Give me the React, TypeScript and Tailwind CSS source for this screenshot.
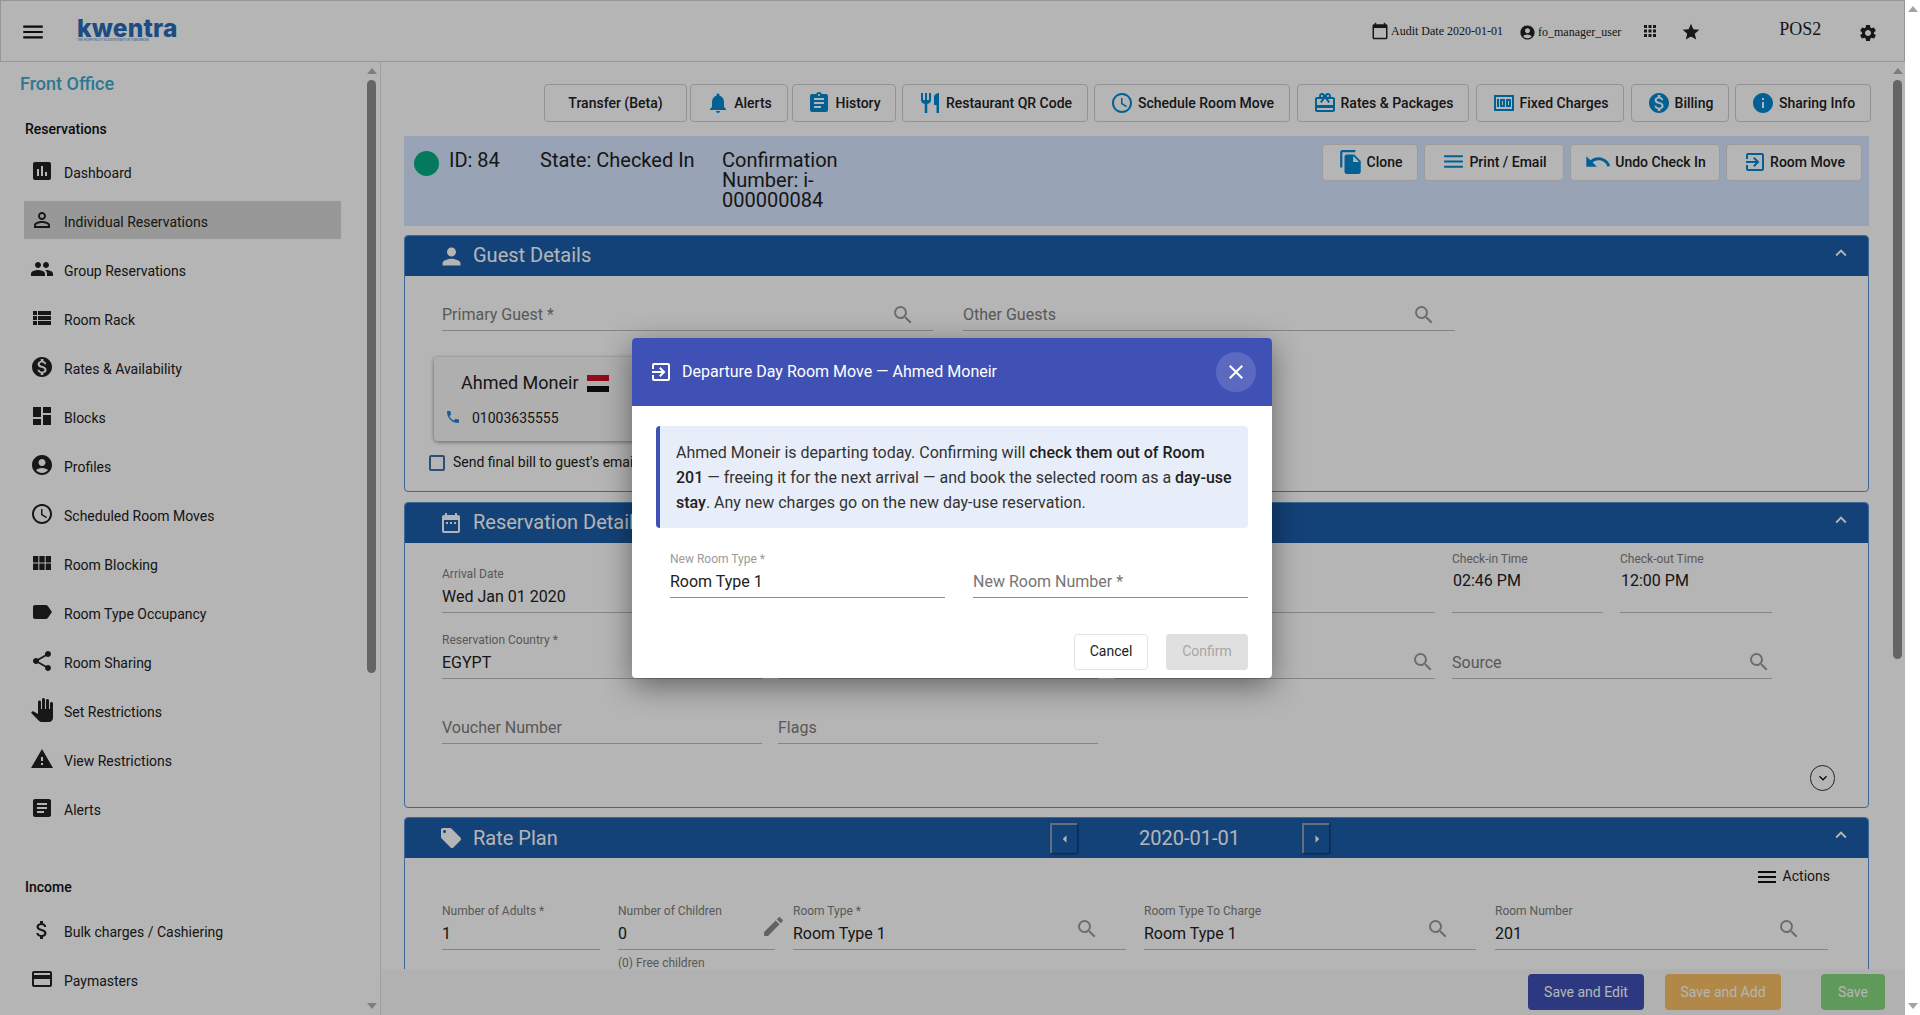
import type { ReactNode } from 'react'
import {
  MdAccessTime, MdAccountCircle, MdApps, MdArrowLeft, MdArrowRight, MdArticle, MdAssignment, MdAttachMoney,
  MdCalendarToday, MdCardGiftcard, MdClose, MdCreditCard, MdDashboard, MdDateRange, MdEdit, MdExitToApp,
  MdFileCopy, MdGroup, MdInfo, MdInsertChart, MdKeyboardArrowDown, MdKeyboardArrowUp, MdLabel, MdLocalOffer,
  MdMenu, MdMoney, MdMonetizationOn, MdNotifications, MdPanTool, MdPerson, MdPersonOutline, MdPhone,
  MdRestaurant, MdSearch, MdSettings, MdShare, MdStar, MdUndo, MdViewList, MdViewModule, MdWarning,
} from 'react-icons/md'

const RESERVATION_ITEMS = [
  { label: 'Dashboard', icon: <MdInsertChart size={24} /> },
  { label: 'Individual Reservations', icon: <MdPersonOutline size={24} />, active: true },
  { label: 'Group Reservations', icon: <MdGroup size={24} /> },
  { label: 'Room Rack', icon: <MdViewList size={24} /> },
  { label: 'Rates & Availability', icon: <MdMonetizationOn size={24} /> },
  { label: 'Blocks', icon: <MdDashboard size={24} /> },
  { label: 'Profiles', icon: <MdAccountCircle size={24} /> },
  { label: 'Scheduled Room Moves', icon: <MdAccessTime size={24} /> },
  { label: 'Room Blocking', icon: <MdViewModule size={24} /> },
  { label: 'Room Type Occupancy', icon: <MdLabel size={24} /> },
  { label: 'Room Sharing', icon: <MdShare size={24} /> },
  { label: 'Set Restrictions', icon: <MdPanTool size={24} /> },
  { label: 'View Restrictions', icon: <MdWarning size={24} /> },
  { label: 'Alerts', icon: <MdArticle size={24} /> },
]

const INCOME_ITEMS = [
  { label: 'Bulk charges / Cashiering', icon: <MdAttachMoney size={24} /> },
  { label: 'Paymasters', icon: <MdCreditCard size={24} /> },
]

const ACTIONS = [
  { label: 'Transfer (Beta)', cls: 'w-[143px]' },
  { label: 'Alerts', icon: <MdNotifications size={24} />, cls: 'w-[98px] ml-[3px]' },
  { label: 'History', icon: <MdAssignment size={24} />, cls: 'w-[104px] ml-[4px]' },
  { label: 'Restaurant QR Code', icon: <MdRestaurant size={24} />, cls: 'w-[186px] ml-[6px]' },
  { label: 'Schedule Room Move', icon: <MdAccessTime size={24} />, cls: 'w-[196px] ml-[6px]' },
  { label: 'Rates & Packages', icon: <MdCardGiftcard size={24} />, cls: 'w-[172px] ml-[7px]' },
  { label: 'Fixed Charges', icon: <MdMoney size={24} />, cls: 'w-[148px] ml-[7px]' },
  { label: 'Billing', icon: <MdMonetizationOn size={24} />, cls: 'w-[98px] ml-[7px]' },
  { label: 'Sharing Info', icon: <MdInfo size={24} />, cls: 'w-[136px] ml-[6px]' },
]

const STATUS_ACTIONS = [
  { label: 'Clone', icon: <MdFileCopy size={26} />, cls: 'w-[96px]' },
  { label: 'Print / Email', icon: <MdMenu size={25} />, cls: 'w-[140px]' },
  { label: 'Undo Check In', icon: <MdUndo size={28} />, cls: 'w-[150px]' },
  { label: 'Room Move', icon: <MdExitToApp size={24} />, cls: 'w-[136px]' },
]

function ArrowUp({ color }: { color: string }) {
  return <div className={'h-0 w-0 border-x-[5px] border-b-[6px] border-x-transparent ' + color} />
}

function ArrowDown({ color }: { color: string }) {
  return <div className={'h-0 w-0 border-x-[5px] border-t-[6px] border-x-transparent ' + color} />
}

function SideItem({ label, icon, active }: { label: string; icon: ReactNode; active?: boolean }) {
  return (
    <div className={'ml-[24px] mb-[11px] flex h-[38px] w-[317px] items-center gap-[10px] pl-[6px] text-[#212121] ' + (active ? 'bg-[#d6d6d6]' : '')}>
      {icon}
      <span className="pt-[4px] text-[14px]">{label}</span>
    </div>
  )
}

function Sidebar() {
  return (
    <aside className="flex h-[953px] w-[381px] shrink-0 border-r border-[#e0e0e0]">
      <div className="h-full w-[363px] overflow-hidden">
        <div className="mt-[10px] ml-[20px] h-[24px] text-[18px] leading-[24px] font-medium text-[#3fa9cf]">Front Office</div>
        <div className="mt-[23px] ml-[25px] mb-[13px] h-[20px] text-[14px] leading-[20px] font-medium text-[#111]">Reservations</div>
        {RESERVATION_ITEMS.map((item) => (
          <SideItem key={item.label} {...item} />
        ))}
        <div className="mt-[50px] ml-[25px] mb-[14px] h-[20px] text-[14px] leading-[20px] font-medium text-[#111]">Income</div>
        {INCOME_ITEMS.map((item) => (
          <SideItem key={item.label} {...item} />
        ))}
      </div>
      <div className="flex w-[17px] flex-col items-center pt-[6px]">
        <ArrowUp color="border-b-[#b0b0b0]" />
        <div className="mt-[6px] h-[593px] w-[9px] rounded-full bg-[#8f8f8f]" />
        <div className="mt-auto mb-[6px]">
          <ArrowDown color="border-t-[#b0b0b0]" />
        </div>
      </div>
    </aside>
  )
}

function TopBar() {
  return (
    <header className="flex h-[62px] items-start border border-[#d4d4d4] font-['Liberation_Serif',serif] text-[#212121]">
      <div className="mt-[18px] ml-[19px] text-[#111]">
        <MdMenu size={26} />
      </div>
      <div className="mt-[18px] ml-[31px] flex w-[105px] flex-col font-['Inter',sans-serif] text-[#2a6bb8]">
        <span className="text-[24.5px] leading-[19px] font-extrabold tracking-[0.2px]">kwentra</span>
        <span className="text-[3px] leading-[4px] whitespace-nowrap">THE HOSPITALITY ECOSYSTEM FOR TOMORROW</span>
      </div>
      <div className="mt-[20px] ml-[1189px] flex items-center text-[12px] leading-[20px]">
        <MdCalendarToday size={18} />
        <span className="ml-[2px]">Audit Date 2020-01-01</span>
      </div>
      <div className="mt-[21px] ml-[16px] flex items-center text-[12px] leading-[20px]">
        <MdAccountCircle size={17} />
        <span className="ml-[2px]">fo_manager_user</span>
      </div>
      <div className="mt-[21px] ml-[20px]">
        <MdApps size={18} />
      </div>
      <div className="mt-[21px] ml-[22px]">
        <MdStar size={20} />
      </div>
      <div className="mt-[16px] ml-[78px] text-[18px] leading-[24px]">POS2</div>
      <div className="mt-[22px] ml-[37px]">
        <MdSettings size={20} />
      </div>
    </header>
  )
}

function ActionButton({ label, icon, cls, raised }: { label: string; icon?: ReactNode; cls: string; raised?: boolean }) {
  return (
    <button className={'flex shrink-0 items-center justify-center rounded-[4px] border bg-white text-[14px] font-medium text-[#212121] ' + (raised ? 'h-[37px] gap-[3px] border-[#dcdcdc] pb-[2px] ' : 'h-[38px] gap-[4px] border-[#cfcfcf] ') + cls}>
      {icon && <span className="text-[#0288d1]">{icon}</span>}
      {label}
    </button>
  )
}

function Field({ label, value, floating, cls, searchCls, extra }: { label: string; value?: string; floating?: boolean; cls: string; searchCls?: string; extra?: ReactNode }) {
  return (
    <div className={'relative shrink-0 border-b border-[#bdbdbd] ' + cls}>
      {floating && <div className="mb-[3px] h-[16px] text-[12px] leading-[16px] whitespace-nowrap text-[#7d7d7d]">{label}</div>}
      <div className={'h-[24px] text-[16px] leading-[24px] ' + (floating ? 'text-[#212121]' : 'text-[#7d7d7d]')}>{floating ? value : label}</div>
      <div className="h-[3px]" />
      {extra}
      {searchCls && (
        <span className={'absolute text-[#9a9a9a] ' + searchCls}>
          <MdSearch size={24} />
        </span>
      )}
    </div>
  )
}

function PanelHeader({ icon, title, children }: { icon: ReactNode; title?: string; children?: ReactNode }) {
  return (
    <div className="flex h-[40px] items-center bg-[#1c5da9] text-white">
      <div className="ml-[32px] flex w-[28px] justify-center">{icon}</div>
      {title && <div className="ml-[8px] pb-[2px] text-[20px]">{title}</div>}
      {children}
      <div className="mr-[16px] mb-[6px] ml-auto">
        <MdKeyboardArrowUp size={22} />
      </div>
    </div>
  )
}

function GuestPanel() {
  return (
    <section className="mt-[9px] h-[257px] w-[1465px] overflow-hidden rounded-[4px] border border-[#5594d8]">
      <PanelHeader icon={<MdPerson size={27} />} title="Guest Details" />
      <div className="pl-[37px]">
        <div className="flex h-[55px] items-end gap-[30px]">
          <Field label="Primary Guest *" cls="w-[491px]" searchCls="right-[18px] bottom-[3px]" />
          <Field label="Other Guests" cls="w-[492px]" searchCls="right-[19px] bottom-[3px]" />
        </div>
        <div className="mt-[26px] -ml-[8px] h-[84px] w-[260px] rounded-[4px] bg-[#f7f7f7] pl-[27px] shadow-[0_1px_4px_rgba(0,0,0,0.45)]">
          <div className="flex items-center pt-[14px] text-[18px] leading-[24px] text-[#212121]">
            Ahmed Moneir
            <div className="ml-[8px] flex h-[17px] w-[22px] flex-col">
              <div className="h-[6px] bg-[#ce1126]" />
              <div className="h-[5px] bg-[#f5f5f5]" />
              <div className="h-[6px] bg-[#111]" />
            </div>
          </div>
          <div className="-ml-[16px] mt-[13px] flex items-center text-[14px] text-[#212121]">
            <span className="-mt-[4px] text-[#2f7fd0]">
              <MdPhone size={16} />
            </span>
            <span className="ml-[11px]">01003635555</span>
          </div>
        </div>
        <div className="-ml-[13px] mt-[11px] flex items-center text-[14px] text-[#212121]">
          <div className="h-[16px] w-[16px] rounded-[2px] border-2 border-[#3f6fa8]" />
          <span className="ml-[8px]">Send final bill to guest's email</span>
        </div>
      </div>
    </section>
  )
}

function ReservationPanel() {
  return (
    <section className="mt-[10px] h-[306px] w-[1465px] overflow-hidden rounded-[4px] border border-[#5594d8]">
      <PanelHeader icon={<MdDateRange size={24} />} title="Reservation Details" />
      <div className="flex flex-col pl-[37px]">
        <div className="flex h-[70px] items-end gap-[17px]">
          <Field floating label="Arrival Date" value="Wed Jan 01 2020" cls="w-[320px]" />
          <Field label="" cls="w-[319px]" />
          <Field label="" cls="w-[320px]" />
          <div className="relative h-[62px] w-[151px] shrink-0 border-b border-[#bdbdbd]">
            <div className="h-[16px] text-[12px] leading-[16px] text-[#7d7d7d]">Check-in Time</div>
            <div className="mt-[2px] pl-[1px] text-[16px] leading-[24px] text-[#212121]">02:46 PM</div>
          </div>
          <div className="relative h-[62px] w-[152px] shrink-0 border-b border-[#bdbdbd]">
            <div className="h-[16px] text-[12px] leading-[16px] text-[#7d7d7d]">Check-out Time</div>
            <div className="mt-[2px] pl-[1px] text-[16px] leading-[24px] text-[#212121]">12:00 PM</div>
          </div>
        </div>
        <div className="flex h-[66px] items-end gap-[17px]">
          <Field floating label="Reservation Country *" value="EGYPT" cls="w-[320px]" />
          <Field label="" cls="w-[319px]" />
          <Field label="" cls="w-[320px]" searchCls="right-[0px] bottom-[4px]" />
          <Field label="Source" cls="w-[320px]" searchCls="right-[1px] bottom-[4px]" />
        </div>
        <div className="flex h-[65px] items-end gap-[16px]">
          <Field label="Voucher Number" cls="w-[320px]" />
          <Field label="Flags" cls="w-[320px]" />
        </div>
        <div className="mt-[21px] ml-[1368px] flex h-[26px] w-[25px] items-center justify-center rounded-full border border-[#333] text-[#111]">
          <MdKeyboardArrowDown size={16} />
        </div>
      </div>
    </section>
  )
}

function RatePlanPanel() {
  return (
    <section className="mt-[9px] h-[300px] w-[1465px] overflow-hidden rounded-t-[4px] border border-[#5594d8]">
      <PanelHeader icon={<MdLocalOffer size={24} />}>
        <div className="ml-[8px] w-[577px] text-[20px]">Rate Plan</div>
        <div className="flex h-[30px] w-[27px] items-center justify-center border-t-2 border-l-2 border-[#8a9db5] shadow-[1px_1px_2px_rgba(0,0,0,0.5)]">
          <MdArrowLeft size={18} />
        </div>
        <div className="w-[225px] text-center text-[20px]">2020-01-01</div>
        <div className="flex h-[30px] w-[27px] items-center justify-center border-t-2 border-l-2 border-[#8a9db5] shadow-[1px_1px_2px_rgba(0,0,0,0.5)]">
          <MdArrowRight size={18} />
        </div>
      </PanelHeader>
      <div className="flex flex-col pl-[37px]">
        <div className="flex h-[38px] items-center justify-end pr-[38px] pb-[1px] text-[14px] text-[#212121]">
          <MdMenu size={24} className="text-[#111]" />
          <span className="ml-[4px]">Actions</span>
        </div>
        <div className="flex h-[54px] items-end">
          <Field floating label="Number of Adults *" value="1" cls="w-[158px]" />
          <Field
            floating
            label="Number of Children"
            value="0"
            cls="ml-[18px] w-[157px]"
            extra={
              <span className="absolute -right-[11px] bottom-[10px] text-[#8e8986]">
                <MdEdit size={25} />
              </span>
            }
          />
          <Field floating label="Room Type *" value="Room Type 1" cls="ml-[18px] w-[333px]" searchCls="right-[27px] bottom-[8px]" />
          <Field floating label="Room Type To Charge" value="Room Type 1" cls="ml-[18px] w-[332px]" searchCls="right-[26px] bottom-[8px]" />
          <Field floating label="Room Number" value="201" cls="ml-[19px] w-[333px]" searchCls="right-[27px] bottom-[8px]" />
        </div>
        <div className="mt-[5px] ml-[176px] text-[12px] leading-[16px] text-[#7d7d7d]">(0) Free children</div>
      </div>
    </section>
  )
}

function Main() {
  return (
    <main className="relative flex h-[953px] w-[1524px] overflow-hidden">
      <div className="w-[1509px] overflow-hidden pl-[23px]">
        <div className="flex pt-[22px] pl-[140px]">
          {ACTIONS.map((a) => (
            <ActionButton key={a.label} {...a} />
          ))}
        </div>
        <div className="mt-[14px] flex h-[90px] w-[1465px] items-start bg-[#d6e6ff] text-[20px] leading-[20px] text-[#212121]">
          <div className="mt-[15px] ml-[10px] h-[25px] w-[25px] rounded-full bg-[#04ac80]" />
          <div className="mt-[14px] ml-[10px] w-[91px]">ID: 84</div>
          <div className="mt-[14px] w-[182px]">State: Checked In</div>
          <div className="mt-[14px] w-[125px]">Confirmation Number: i-000000084</div>
          <div className="mt-[8px] mr-[7px] ml-auto flex gap-[6px]">
            {STATUS_ACTIONS.map((a) => (
              <ActionButton key={a.label} {...a} raised />
            ))}
          </div>
        </div>
        <GuestPanel />
        <ReservationPanel />
        <RatePlanPanel />
      </div>
      <div className="flex w-[15px] flex-col items-center pt-[6px]">
        <ArrowUp color="border-b-[#b0b0b0]" />
        <div className="mt-[6px] h-[579px] w-[9px] rounded-full bg-[#8f8f8f]" />
      </div>
      <div className="absolute right-0 bottom-0 left-0 flex h-[46px] items-center justify-end bg-[#fafafa] pr-[20px] text-[14px]">
        <button className="h-[36px] w-[116px] rounded-[4px] bg-[#3f51b5] text-white">Save and Edit</button>
        <button className="ml-[21px] h-[36px] w-[116px] rounded-[4px] bg-[#f9c064] text-white">Save and Add</button>
        <button className="ml-[40px] h-[36px] w-[64px] rounded-[4px] bg-[#86d980] text-white">Save</button>
      </div>
    </main>
  )
}

function MoveDialog() {
  return (
    <div role="dialog" className="w-[640px] overflow-hidden rounded-[4px] bg-white shadow-[0_8px_30px_rgba(0,0,0,0.45)]">
      <div className="flex h-[68px] items-center bg-[#3f51b5] pr-[16px] pl-[17px] text-white">
        <MdExitToApp size={24} />
        <div className="ml-[9px] text-[16px]">Departure Day Room Move — Ahmed Moneir</div>
        <button className="ml-auto flex h-[40px] w-[40px] items-center justify-center rounded-full bg-white/15">
          <MdClose size={24} />
        </button>
      </div>
      <div className="px-[24px] pt-[20px] pb-[8px]">
        <div className="flex h-[102px] items-center rounded-[4px] border-l-4 border-[#3f51b5] bg-[#e8eef9] pr-[14px] pl-[16px] text-[16px] leading-[25px] text-[#333]">
          <p className="pt-[1px]">
            Ahmed Moneir is departing today. Confirming will <b className="font-medium text-[#212121]">check them out of Room 201</b> — freeing it for the next arrival — and book the selected room as a <b className="font-medium text-[#212121]">day-use stay</b>. Any new charges go on the new day-use reservation.
          </p>
        </div>
        <div className="mt-[23px] ml-[14px] flex gap-[28px]">
          <div className="w-[275px] border-b border-[#8c8c8c]">
            <div className="mb-[3px] h-[16px] text-[12px] leading-[16px] text-[#9a9a9a]">New Room Type *</div>
            <div className="h-[24px] text-[16px] leading-[24px] text-[#212121]">Room Type 1</div>
            <div className="h-[3px]" />
          </div>
          <div className="flex w-[275px] flex-col justify-end border-b border-[#8c8c8c]">
            <div className="h-[24px] text-[16px] leading-[24px] text-[#757575]">New Room Number *</div>
            <div className="h-[3px]" />
          </div>
        </div>
        <div className="mt-[36px] flex justify-end gap-[18px] text-[14px]">
          <button className="h-[36px] w-[74px] rounded-[4px] border border-[#e3e3e3] bg-white text-[#212121]">Cancel</button>
          <button className="h-[36px] w-[82px] rounded-[4px] bg-[#e0e0e0] text-[#a6a6a6]">Confirm</button>
        </div>
      </div>
    </div>
  )
}

export default function App() {
  return (
    <div className="relative flex h-[1015px] w-[1920px] overflow-hidden bg-white font-['Roboto',sans-serif]">
      <div className="w-[1905px]">
        <TopBar />
        <div className="flex">
          <Sidebar />
          <Main />
        </div>
      </div>
      <div className="flex w-[15px] flex-col items-center py-[6px]">
        <ArrowUp color="border-b-[#a3a3a3]" />
        <div className="mt-auto">
          <ArrowDown color="border-t-[#a3a3a3]" />
        </div>
      </div>
      <div className="absolute top-0 bottom-0 left-0 flex w-[1905px] items-center justify-center bg-black/[0.29] pr-[1px]">
        <MoveDialog />
      </div>
    </div>
  )
}
